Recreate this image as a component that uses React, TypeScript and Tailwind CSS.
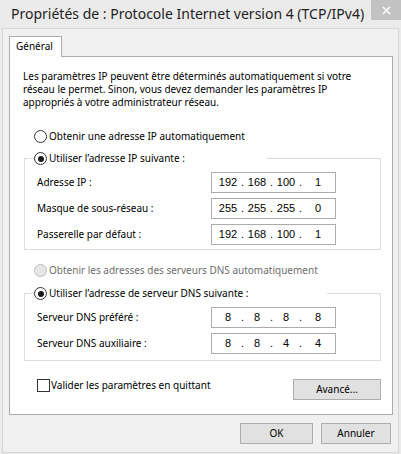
import { Fragment } from 'react';

function Radio({ checked = false, disabled = false }: { checked?: boolean; disabled?: boolean }) {
  return (
    <span
      className={`flex h-[13px] w-[13px] shrink-0 items-center justify-center rounded-full border ${
        disabled ? 'border-[#bcbcbc] bg-[#e6e6e6]' : 'border-[#333333] bg-white'
      }`}
    >
      {checked && <span className="h-[6px] w-[6px] rounded-full bg-[#1a1a1a]" />}
    </span>
  );
}

function IpBox({ parts }: { parts: string[] }) {
  return (
    <div className="flex h-[21px] w-[125px] items-center border border-[#acacac] bg-white pl-[4px] font-['Liberation_Sans',sans-serif] text-[11px] text-black">
      {parts.map((p, i) => (
        <Fragment key={i}>
          <span className={i < 3 ? 'w-[24px] text-center' : 'w-[30px] text-center'}>{p}</span>
          {i < 3 && <span className="w-[5px] text-center">.</span>}
        </Fragment>
      ))}
    </div>
  );
}

function Row({ label, parts }: { label: string; parts: string[] }) {
  return (
    <div className="flex h-[21px] items-center">
      <span className="w-[186px] pl-[12px]">{label}</span>
      <IpBox parts={parts} />
    </div>
  );
}

function Btn({ children, w }: { children: string; w: string }) {
  return (
    <button className={`flex h-[21px] ${w} items-center justify-center border border-[#adadad] bg-[#e1e1e1] text-black`}>
      {children}
    </button>
  );
}

export default function App() {
  return (
    <div className="h-[454px] w-[401px] overflow-hidden bg-[#ebebeb] font-['Noto_Sans','DejaVu_Sans',sans-serif] text-[10px] leading-[13px] text-black">
      {/* title bar */}
      <div className="flex h-[28px] items-start">
        <span className="pl-[11px] text-[14px] leading-[28px] text-[#1e1e1e]">
          Propriétés de : Protocole Internet version 4 (TCP/IPv4)
        </span>
        <div className="ml-auto flex h-[20px] w-[30px] items-center justify-center bg-[#c2c2c2]">
          <svg width="9" height="9" viewBox="0 0 9 9">
            <path d="M1 1 L8 8 M8 1 L1 8" stroke="white" strokeWidth="1.6" />
          </svg>
        </div>
      </div>

      {/* client area */}
      <div className="mx-[2px] h-[425px] border border-[#d6d6d6] bg-[#f0f0f0] pt-[7px]">
        <div className="relative z-10 -mb-[1px] ml-[6px] h-[21px] w-[53px] border-x border-t border-[#acacac] bg-white pl-[6px] leading-[19px]">
          Général
        </div>

        <div className="ml-[6px] w-[384px] border border-[#acacac] bg-white pb-[14px]">
          <p className="pl-[13px] pt-[13px] leading-[13px] whitespace-nowrap">
            Les paramètres IP peuvent être déterminés automatiquement si votre
            <br />
            réseau le permet. Sinon, vous devez demander les paramètres IP
            <br />
            appropriés à votre administrateur réseau.
          </p>

          <div className="ml-[24px] mt-[21px] flex h-[13px] items-center gap-[2px]">
            <Radio />
            <span>Obtenir une adresse IP automatiquement</span>
          </div>

          <fieldset className="ml-[14px] mt-[9px] w-[357px] border border-[#dcdcdc] pb-[4px]">
            <legend className="ml-[9px] w-[233px]">
              <div className="flex h-[13px] items-center gap-[2px]">
                <Radio checked />
                <span>Utiliser l’adresse IP suivante :</span>
              </div>
            </legend>
            <div className="mt-[7px] flex flex-col gap-[5px]">
              <Row label="Adresse IP :" parts={['192', '168', '100', '1']} />
              <Row label="Masque de sous-réseau :" parts={['255', '255', '255', '0']} />
              <Row label="Passerelle par défaut :" parts={['192', '168', '100', '1']} />
            </div>
          </fieldset>

          <div className="ml-[24px] mt-[14px] flex h-[13px] items-center gap-[2px]">
            <Radio disabled />
            <span className="text-[#6d6d6d]">Obtenir les adresses des serveurs DNS automatiquement</span>
          </div>

          <fieldset className="ml-[14px] mt-[10px] w-[357px] border border-[#dcdcdc] pb-[6px]">
            <legend className="ml-[9px] w-[293px]">
              <div className="flex h-[13px] items-center gap-[2px]">
                <Radio checked />
                <span>Utiliser l’adresse de serveur DNS suivante :</span>
              </div>
            </legend>
            <div className="mt-[7px] flex flex-col gap-[5px]">
              <Row label="Serveur DNS préféré :" parts={['8', '8', '8', '8']} />
              <Row label="Serveur DNS auxiliaire :" parts={['8', '8', '4', '4']} />
            </div>
          </fieldset>

          <div className="ml-[14px] mt-[18px] flex w-[357px] items-start">
            <div className="ml-[13px] flex h-[13px] items-center gap-[1px]">
              <span className="h-[13px] w-[13px] border border-[#333333] bg-white" />
              <span>Valider les paramètres en quittant</span>
            </div>
            <div className="ml-auto">
              <Btn w="w-[88px]">Avancé...</Btn>
            </div>
          </div>
        </div>

        <div className="mt-[8px] flex justify-end gap-[8px] pr-[7px]">
          <Btn w="w-[73px]">OK</Btn>
          <Btn w="w-[70px]">Annuler</Btn>
        </div>
      </div>
    </div>
  );
}
